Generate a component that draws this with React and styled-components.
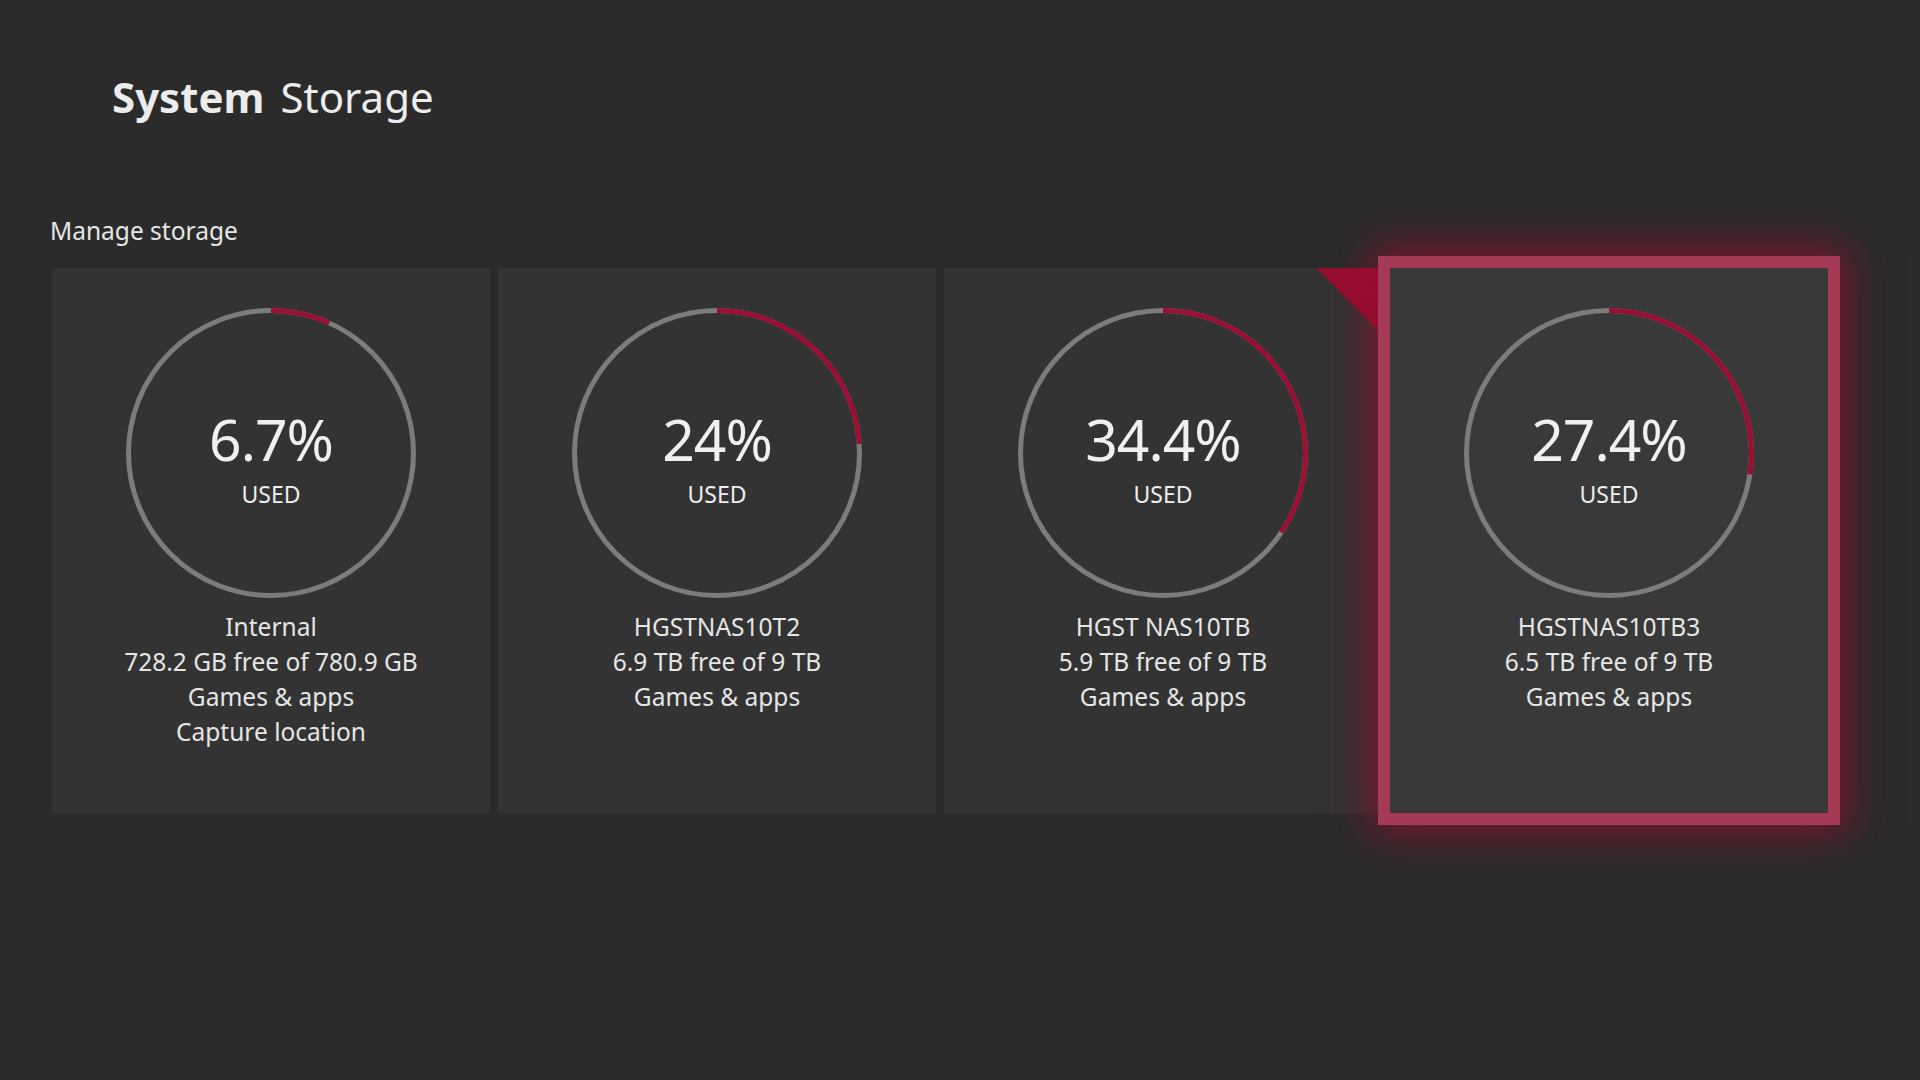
import React from 'react';
import styled, {createGlobalStyle} from 'styled-components';

const GlobalStyle = createGlobalStyle`
    body {
        margin: 0;
        background-color: #2b2b2b;
        font-family: "Noto Sans", "Open Sans", sans-serif;
        color: #e8e8e8;
    }
`

const Page = styled.div`
    width: 1920px;
    height: 1080px;
    box-sizing: border-box;
    padding: 69px 92px 0 50px;
`

const Title = styled.h1`
    margin: 0 0 0 62px;
    font-size: 42px;
    line-height: 56px;
    font-weight: 400;
    display: flex;
    gap: 16px;
    color: #ececec;
`

const TitleStrong = styled.span`
    font-weight: 700;
`

const Section = styled.h2`
    margin: 88px 0 0 0;
    font-size: 24.5px;
    line-height: 36px;
    font-weight: 400;
    color: #e6e6e6;
`

const Row = styled.div`
    display: grid;
    grid-template-columns: repeat(4, 438px);
    gap: 8px;
    margin: 19px 0 0 2px;
`

const Card = styled.div`
    position: relative;
    height: 545px;
    background-color: ${p => p.$focused ? '#393939' : '#333333'};
    display: flex;
    flex-direction: column;
    align-items: center;
    padding-top: 40px;
    box-sizing: border-box;
    z-index: ${p => p.$focused ? 2 : 1};
    box-shadow: ${p => p.$focused
        ? '0 0 0 12px #a53a55, 0 0 40px 18px rgba(150, 12, 45, 0.8)'
        : 'none'};

    ${p => p.$corner && `
        &::after {
            content: "";
            position: absolute;
            top: 0;
            right: 0;
            border-style: solid;
            border-width: 0 66px 66px 0;
            border-color: transparent #960f30 transparent transparent;
        }
    `}
`

const Ring = styled.div`
    display: grid;
    width: 290px;
    height: 290px;

    & > * {
        grid-area: 1 / 1;
    }
`

const RingLabel = styled.div`
    display: flex;
    flex-direction: column;
    align-items: center;
    justify-content: center;
    padding-top: 12px;
`

const Percent = styled.div`
    font-size: 57px;
    line-height: 60px;
    color: #f0f0f0;
    letter-spacing: -1px;
`

const Used = styled.div`
    font-size: 23px;
    line-height: 30px;
    margin-top: 10px;
    color: #eeeeee;
`

const Info = styled.div`
    margin-top: 11px;
    font-size: 24.5px;
    line-height: 35px;
    text-align: center;
    color: #e6e6e6;
`

const R = 142.5
const C = 2 * Math.PI * R

const Gauge = ({value}) => (
    <svg width="290" height="290" viewBox="0 0 290 290">
        <circle cx="145" cy="145" r={R} fill="none" stroke="#7c7c7c" strokeWidth="5" />
        <circle cx="145" cy="145" r={R} fill="none" stroke="#9a0f33" strokeWidth="5"
                strokeDasharray={`${C * value / 100} ${C}`}
                transform="rotate(-90 145 145)" />
    </svg>
)

const drives = [
    {pct: '6.7%', value: 6.7, lines: ['Internal', '728.2 GB free of 780.9 GB', 'Games & apps', 'Capture location']},
    {pct: '24%', value: 24, lines: ['HGSTNAS10T2', '6.9 TB free of 9 TB', 'Games & apps']},
    {pct: '34.4%', value: 34.4, lines: ['HGST NAS10TB', '5.9 TB free of 9 TB', 'Games & apps'], corner: true},
    {pct: '27.4%', value: 27.4, lines: ['HGSTNAS10TB3', '6.5 TB free of 9 TB', 'Games & apps'], focused: true},
]

export default function App() {
    return (
        <Page>
            <GlobalStyle />
            <Title><TitleStrong>System</TitleStrong><span>Storage</span></Title>
            <Section>Manage storage</Section>
            <Row>
                {drives.map(d => (
                    <Card key={d.lines[0]} $focused={d.focused} $corner={d.corner}>
                        <Ring>
                            <Gauge value={d.value} />
                            <RingLabel>
                                <Percent>{d.pct}</Percent>
                                <Used>USED</Used>
                            </RingLabel>
                        </Ring>
                        <Info>
                            {d.lines.map(l => <div key={l}>{l}</div>)}
                        </Info>
                    </Card>
                ))}
            </Row>
        </Page>
    )
}
